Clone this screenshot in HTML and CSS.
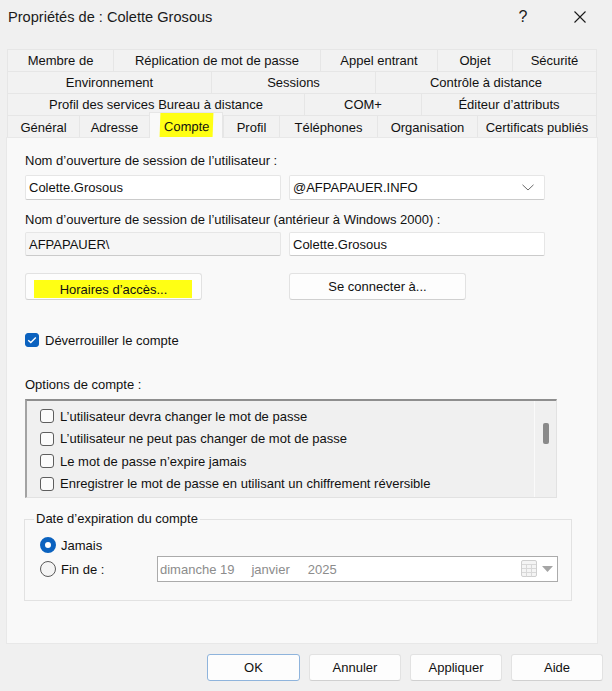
FILE: index.html
```html
<!DOCTYPE html>
<html lang="fr">
<head>
<meta charset="utf-8">
<title>Propriétés de : Colette Grosous</title>
<link rel="stylesheet" href="styles.css">
</head>
<body>
<div class="dialog">
  <header class="titlebar">
    <span class="title">Propriétés de : Colette Grosous</span>
    <span class="tb-btn help">?</span>
    <span class="tb-btn close">
      <svg width="12" height="12" viewBox="0 0 12 12"><path d="M0.5 0.5 L11.5 11.5 M11.5 0.5 L0.5 11.5" stroke="#1a1a1a" stroke-width="1.1" fill="none"/></svg>
    </span>
  </header>

  <nav class="tabs">
    <div class="tabrow row1">
      <div class="tab">Membre de</div>
      <div class="tab">Réplication de mot de passe</div>
      <div class="tab">Appel entrant</div>
      <div class="tab">Objet</div>
      <div class="tab">Sécurité</div>
    </div>
    <div class="tabrow row2">
      <div class="tab">Environnement</div>
      <div class="tab">Sessions</div>
      <div class="tab">Contrôle à distance</div>
    </div>
    <div class="tabrow row3">
      <div class="tab">Profil des services Bureau à distance</div>
      <div class="tab">COM+</div>
      <div class="tab">Éditeur d’attributs</div>
    </div>
    <div class="tabrow row4">
      <div class="tab">Général</div>
      <div class="tab">Adresse</div>
      <div class="tab active"><span class="mark">Compte</span></div>
      <div class="tab">Profil</div>
      <div class="tab">Téléphones</div>
      <div class="tab">Organisation</div>
      <div class="tab">Certificats publiés</div>
    </div>
  </nav>

  <section class="panel">
    <div class="label first">Nom d’ouverture de session de l’utilisateur :</div>
    <div class="fieldrow tall">
      <div class="textbox">Colette.Grosous</div>
      <div class="textbox combo">
        <span>@AFPAPAUER.INFO</span>
        <svg width="12" height="7" viewBox="0 0 12 7"><path d="M0.5 0.8 L6 6 L11.5 0.8" stroke="#6a6a6a" stroke-width="1" fill="none"/></svg>
      </div>
    </div>

    <div class="label second">Nom d’ouverture de session de l’utilisateur (antérieur à Windows 2000) :</div>
    <div class="fieldrow">
      <div class="textbox readonly">AFPAPAUER\</div>
      <div class="textbox">Colette.Grosous</div>
    </div>

    <div class="btnrow">
      <div class="button wide"><span class="mark marker">Horaires d’accès...</span></div>
      <div class="button wide">Se connecter à...</div>
    </div>

    <div class="check unlock">
      <span class="box checked">
        <svg width="10" height="8" viewBox="0 0 10 8"><path d="M1.2 4.2 L3.8 6.6 L8.8 1.4" stroke="#fff" stroke-width="1.4" fill="none"/></svg>
      </span>
      <span>Déverrouiller le compte</span>
    </div>

    <div class="label options">Options de compte :</div>
    <div class="listbox">
      <div class="items">
        <div class="check item"><span class="box"></span><span>L’utilisateur devra changer le mot de passe</span></div>
        <div class="check item"><span class="box"></span><span>L’utilisateur ne peut pas changer de mot de passe</span></div>
        <div class="check item"><span class="box"></span><span>Le mot de passe n’expire jamais</span></div>
        <div class="check item"><span class="box"></span><span>Enregistrer le mot de passe en utilisant un chiffrement réversible</span></div>
      </div>
      <div class="scrollbar"><div class="thumb"></div></div>
    </div>

    <fieldset class="group">
      <legend>Date d’expiration du compte</legend>
      <div class="radio never"><span class="dot on"></span><span>Jamais</span></div>
      <div class="radio until">
        <span class="dot"></span><span class="radio-label">Fin de :</span>
        <div class="datepicker">
          <span class="d-day">dimanche 19</span>
          <span class="d-month">janvier</span>
          <span class="d-year">2025</span>
          <svg class="cal" width="17" height="18" viewBox="0 0 17 18">
            <rect x="0.5" y="0.5" width="15" height="16" rx="1.5" fill="#f4f4f4" stroke="#cfcfcf"/>
            <path d="M1 4.5 H15 M1 8.5 H15 M1 12.5 H15 M5.5 4.5 V16.5 M10.5 4.5 V16.5" stroke="#d8d8d8" stroke-width="1"/>
          </svg>
          <svg class="arrow" width="11" height="6" viewBox="0 0 11 6"><path d="M0 0 H11 L5.5 6 Z" fill="#a5a5a5"/></svg>
        </div>
      </div>
    </fieldset>
  </section>

  <footer class="actions">
    <div class="button action default">OK</div>
    <div class="button action">Annuler</div>
    <div class="button action">Appliquer</div>
    <div class="button action">Aide</div>
  </footer>
</div>
</body>
</html>
```

FILE: styles.css
```css
* {
  box-sizing: border-box;
}

html, body {
  margin: 0;
  padding: 0;
}

body {
  width: 612px;
  height: 691px;
  background: #f0f0f0;
  font-family: "Liberation Sans", Arial, sans-serif;
  font-size: 13px;
  color: #111;
  overflow: hidden;
}

.dialog {
  display: flex;
  flex-direction: column;
  width: 612px;
  height: 691px;
}

/* ---------- title bar ---------- */
.titlebar {
  display: flex;
  align-items: center;
  height: 34px;
  padding-left: 8px;
  padding-right: 9px;
}

.title {
  font-size: 14.6px;
  color: #1a1a1a;
  flex: 1;
}

.tb-btn {
  display: flex;
  align-items: center;
  justify-content: center;
  width: 46px;
  height: 34px;
}

.help {
  font-size: 16px;
  color: #1a1a1a;
  margin-right: 11px;
}

/* ---------- tabs ---------- */
.tabs {
  margin-top: 15px;
  padding-left: 7px;
  display: flex;
  flex-direction: column;
}

.tabrow {
  display: grid;
  width: 590px;
  height: 22px;
}

.row1 { grid-template-columns: 106px 207px 117px 75px 85px; }
.row2 { grid-template-columns: 204px 164px 222px; }
.row3 { grid-template-columns: 297px 117px 176px; }
.row4 { grid-template-columns: 72px 70px 74px 56px 98px 100px 120px; }

.tab {
  display: flex;
  align-items: center;
  justify-content: center;
  background: #f2f2f2;
  border-top: 1px solid #e6e6e6;
  border-left: 1px solid #e6e6e6;
  white-space: nowrap;
  color: #111;
}

.tab:last-child {
  border-right: 1px solid #e6e6e6;
}

.tab.active {
  position: relative;
  z-index: 2;
  margin-top: -3px;
  height: 26px;
  background: #f9f9f9;
  border-right: 1px solid #e6e6e6;
  align-items: stretch;
}

.mark {
  background: #ffff14;
}

.tab.active .mark {
  display: flex;
  align-items: center;
  padding: 2px 3px 0 4px;
  margin-bottom: 1px;
  transform: skewX(-2deg);
}

/* ---------- panel ---------- */
.panel {
  position: relative;
  z-index: 1;
  margin-left: 6px;
  width: 592px;
  height: 507px;
  background: #f9f9f9;
  border: 1px solid #e8e8e8;
  padding: 15px 0 0 18px;
  display: flex;
  flex-direction: column;
}

.label {
  height: 16px;
  line-height: 16px;
  white-space: nowrap;
}

.label.second { margin-top: 12px; }
.label.options { margin-top: 29px; }

.fieldrow {
  display: flex;
  gap: 8px;
  height: 24px;
  margin-top: 4px;
}

.fieldrow.tall {
  height: 25px;
  margin-top: 6px;
}

.textbox {
  width: 256px;
  height: 100%;
  background: #fff;
  border: 1px solid #e6e6e6;
  border-bottom-color: #cbcbcb;
  border-radius: 2px;
  display: flex;
  align-items: center;
  padding-left: 3px;
  color: #111;
}

.textbox.readonly {
  background: #f6f6f6;
}

.combo {
  justify-content: space-between;
  padding-right: 10px;
}

/* ---------- buttons ---------- */
.btnrow {
  display: flex;
  gap: 87px;
  margin-top: 17px;
}

.button {
  display: flex;
  align-items: center;
  justify-content: center;
  height: 27px;
  background: #fdfdfd;
  border: 1px solid #e2e2e2;
  border-bottom-color: #d0d0d0;
  border-radius: 3px;
  color: #111;
  white-space: nowrap;
}

.button.wide {
  width: 177px;
}

.marker {
  display: inline-flex;
  align-items: center;
  height: 18px;
  padding: 1px 25px 0 26px;
  margin-top: 4px;
  margin-left: -1px;
}

/* ---------- check boxes ---------- */
.check {
  display: flex;
  align-items: center;
  white-space: nowrap;
}

.unlock {
  margin-top: 32px;
  height: 16px;
  gap: 6px;
}

.box {
  display: flex;
  align-items: center;
  justify-content: center;
  width: 14px;
  height: 14px;
  border: 1px solid #5e5e5e;
  border-radius: 3px;
  background: #fbfbfb;
  flex: none;
}

.box.checked {
  background: #0b62bf;
  border-color: #0b62bf;
}

/* ---------- list ---------- */
.listbox {
  margin-top: 6px;
  width: 532px;
  height: 99px;
  background: #f0f0f0;
  border-top: 2px solid #8e8e8e;
  border-left: 2px solid #a3a3a3;
  border-right: 1px solid #e2e2e2;
  border-bottom: 1px solid #e2e2e2;
  display: flex;
}

.items {
  flex: 1;
  padding: 4px 0 0 13px;
  overflow: hidden;
}

.item {
  height: 22.5px;
  gap: 6px;
}

.scrollbar {
  width: 22px;
  border-left: 1px solid #fafafa;
  display: flex;
  justify-content: center;
  padding-left: 1px;
}

.thumb {
  width: 6px;
  height: 21px;
  margin-top: 22px;
  background: #8a8a8a;
  border-radius: 2px;
}

/* ---------- expiry group ---------- */
.group {
  margin: 13px 0 0 -1px;
  width: 548px;
  height: 90px;
  border: 1px solid #e2e2e2;
  padding: 0 0 0 9px;
  min-width: 0;
}

.group legend {
  padding: 0 2px;
  height: 16px;
  line-height: 16px;
}

.radio {
  display: flex;
  align-items: center;
  gap: 5px;
  padding-left: 6px;
}

.never {
  height: 18px;
  margin-top: 9px;
}

.until {
  height: 26px;
  margin-top: 2px;
}

.dot {
  width: 16px;
  height: 16px;
  border-radius: 50%;
  border: 1px solid #5a5a5a;
  background: #f4f4f4;
  flex: none;
}

.dot.on {
  border: 5px solid #0b62bf;
  background: #fff;
}

.radio-label {
  flex: 1;
}

.datepicker {
  width: 401px;
  height: 26px;
  margin-right: 13px;
  background: #fff;
  border: 1px solid #ababab;
  display: flex;
  align-items: center;
  padding-left: 2px;
  color: #8c8c8c;
}

.d-month { margin-left: 17px; }
.d-year { margin-left: 18px; flex: 1; }

.cal {
  margin-right: 4px;
}

.arrow {
  margin-right: 4px;
}

/* ---------- dialog buttons ---------- */
.actions {
  display: flex;
  justify-content: flex-end;
  gap: 9px;
  padding-right: 9px;
  margin-top: 10px;
}

.button.action {
  width: 92px;
}

.button.default {
  width: 93px;
  border: 1px solid #8fb4dc;
}
```
